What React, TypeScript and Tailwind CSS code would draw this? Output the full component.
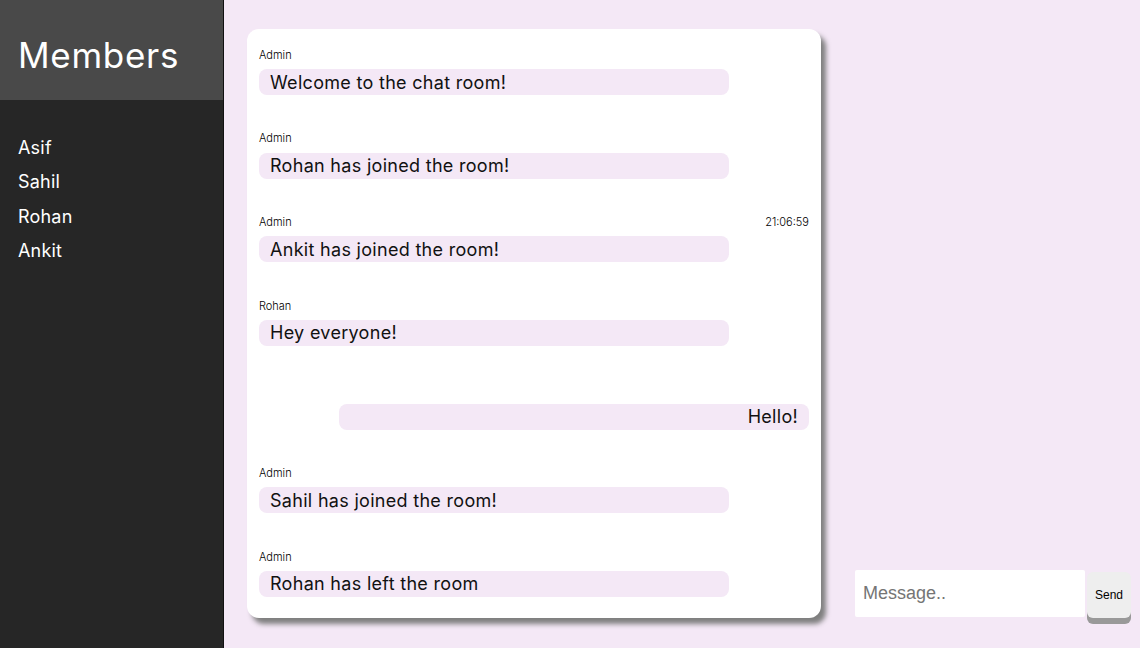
import React from "react";

const font = { fontFamily: "Inter, 'DejaVu Sans', sans-serif" };

type Msg = { name: string; text: string; own?: boolean; time?: string };

const messages: Msg[] = [
  { name: "Admin", text: "Welcome to the chat room!" },
  { name: "Admin", text: "Rohan has joined the room!" },
  { name: "Admin", text: "Ankit has joined the room!", time: "21:06:59" },
  { name: "Rohan", text: "Hey everyone!" },
  { name: "", text: "Hello!", own: true },
  { name: "Admin", text: "Sahil has joined the room!" },
  { name: "Admin", text: "Rohan has left the room" },
];

export default function App() {
  return (
    <div className="flex h-[648px] w-[1140px] overflow-hidden bg-[#f4e8f6]" style={font}>
      <aside className="flex w-[224px] shrink-0 flex-col border-r border-[#111] bg-[#262626]">
        <div className="flex h-[100px] items-center bg-[#494949] pl-[18px] pt-[10px]">
          <h1 className="text-[35px] font-normal leading-none tracking-[0.7px] text-white">Members</h1>
        </div>
        <ul className="flex flex-col gap-[14.33px] pl-[18px] pt-[38px] text-[18px] leading-[20px] tracking-[0.2px] text-white">
          <li>Asif</li>
          <li>Sahil</li>
          <li>Rohan</li>
          <li>Ankit</li>
        </ul>
      </aside>
      <main className="flex flex-1 items-end gap-[34px] pb-[30px] pl-[23px] pt-[29px]">
        <section className="flex h-[589px] w-[574px] shrink-0 flex-col gap-[35.67px] rounded-[12px] bg-white px-[12px] pt-[18px] shadow-[5px_6px_5px_#7f7f7f]">
          {messages.map((m, i) => (
            <div key={i} className="flex flex-col gap-[6px]">
              <div className="flex h-[16px] items-center justify-between text-[11px] font-light text-black">
                <span>{m.name}</span>
                {m.time ? <span>{m.time}</span> : null}
              </div>
              <div
                className={`flex h-[26px] w-[470px] items-center rounded-[8px] bg-[#f4e8f6] px-[11px] text-[18px] tracking-[0.3px] text-[#111] ${
                  m.own ? "self-end justify-end" : ""
                }`}
              >
                {m.text}
              </div>
            </div>
          ))}
        </section>
        <div className="flex items-start gap-[2px]">
          <input
            className="h-[47px] w-[230px] rounded-[2px] bg-white px-[8px] text-[18px] outline-none placeholder:text-[#757575]"
            style={{ fontFamily: "'Liberation Sans', Arial, sans-serif" }}
            placeholder="Message.."
          />
          <button
            className="mt-[2px] h-[46px] w-[44px] rounded-[6px] bg-[#eeeeee] text-[12px] text-black shadow-[0_6px_0_#999]"
            style={{ fontFamily: "'Liberation Sans', Arial, sans-serif" }}
          >
            Send
          </button>
        </div>
      </main>
    </div>
  );
}
